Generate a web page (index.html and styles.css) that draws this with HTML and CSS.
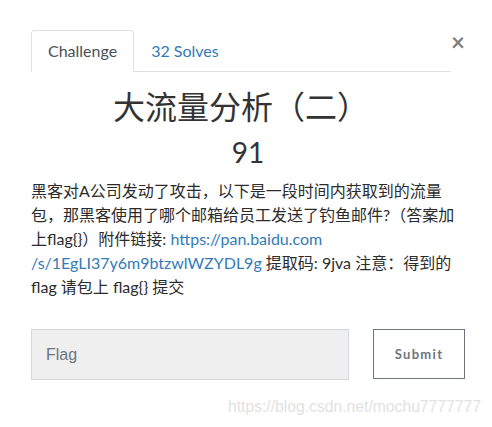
FILE: index.html
```html
<!DOCTYPE html>
<html lang="zh-CN">
<head>
    <meta charset="UTF-8">
    <meta name="viewport" content="width=device-width, initial-scale=1.0">
    <title>Challenge</title>
    <link rel="stylesheet" href="styles.css">
</head>
<body>
    <div class="modal">
        <div class="modal-head">
            <ul class="tabs">
                <li class="tab active">Challenge</li>
                <li class="tab"><a href="#">32 Solves</a></li>
            </ul>
            <button class="close">&times;</button>
        </div>
        <h2 class="chal-name">大流量分析（二）</h2>
        <h3 class="chal-value">91</h3>
        <div class="chal-desc">
            <p>黑客对A公司发动了攻击，以下是一段时间内获取到的流量包，那黑客使用了哪个邮箱给员工发送了钓鱼邮件?（答案加上flag{}）附件链接: <a href="#">https://pan.baidu.com</a></p>
            <p><a href="#">/s/1EgLI37y6m9btzwlWZYDL9g</a> 提取码: 9jva 注意：得到的</p>
            <p>flag 请包上 flag{} 提交</p>
        </div>
        <div class="submit-row">
            <input type="text" class="flag-input" placeholder="Flag">
            <button class="submit-btn">Submit</button>
        </div>
    </div>
    <div class="watermark">https://blog.csdn.net/mochu7777777</div>
</body>
</html>
```

FILE: styles.css
```css
body {
    margin: 0;
    font-family: Lato, "Noto Sans CJK SC", sans-serif;
    color: #212529;
    background: #fff;
    position: relative;
    height: 427px;
    overflow: hidden;
}
.modal {
    padding: 30px 27px 0 31px;
    width: 434px;
}
.modal-head {
    display: flex;
    align-items: flex-start;
}
.tabs {
    flex: 1;
    display: flex;
    margin: 0;
    padding: 0;
    list-style: none;
    border-bottom: 1px solid #dee2e6;
}
.tab {
    padding: 0 16px;
    line-height: 40px;
    font-size: 16px;
    border: 1px solid transparent;
    border-radius: 4px 4px 0 0;
    margin-bottom: -1px;
}
.tab.active {
    color: #495057;
    border-color: #dee2e6 #dee2e6 #fff;
}
.tab a {
    color: #337ab7;
    text-decoration: none;
}
.close {
    width: 14px;
    padding: 0;
    margin-top: 0;
    border: none;
    background: none;
    font-family: Lato, sans-serif;
    font-size: 24px;
    font-weight: 700;
    line-height: 24px;
    color: #000;
    opacity: 0.5;
    cursor: pointer;
}
.chal-name {
    margin: 16px 14px 0 0;
    text-align: center;
    font-size: 32px;
    font-weight: 400;
    line-height: 38px;
    color: #333;
}
.chal-value {
    margin: 9px 0 0;
    text-align: center;
    font-size: 28px;
    font-weight: 400;
    line-height: 34px;
    color: #333;
}
.chal-desc {
    margin: 10px 0 0;
    font-size: 16px;
    line-height: 24px;
    color: #2b2b2b;
}
.chal-desc p {
    margin: 0;
    width: 424px;
}
.chal-desc a {
    color: #337ab7;
    text-decoration: none;
}
.submit-row {
    display: flex;
    justify-content: space-between;
    align-items: flex-start;
    margin-top: 30px;
}
.flag-input {
    box-sizing: border-box;
    width: 318px;
    height: 51px;
    padding: 0 14px;
    border: 1px solid #d4d7db;
    background: #efefef;
    font-family: "Liberation Sans", Arial, sans-serif;
    font-size: 16px;
    color: #495057;
}
.flag-input::placeholder {
    color: #6c757d;
}
.submit-btn {
    box-sizing: border-box;
    width: 92px;
    height: 50px;
    border: 1px solid #6c757d;
    background: #fff;
    font-family: Lato, sans-serif;
    font-size: 13px;
    font-weight: 700;
    letter-spacing: 1.3px;
    color: #6c757d;
    cursor: pointer;
}
.watermark {
    position: absolute;
    left: 228px;
    top: 398px;
    font-family: "Liberation Sans", Arial, sans-serif;
    font-size: 15.7px;
    color: #e2e2e2;
    white-space: nowrap;
}
```
